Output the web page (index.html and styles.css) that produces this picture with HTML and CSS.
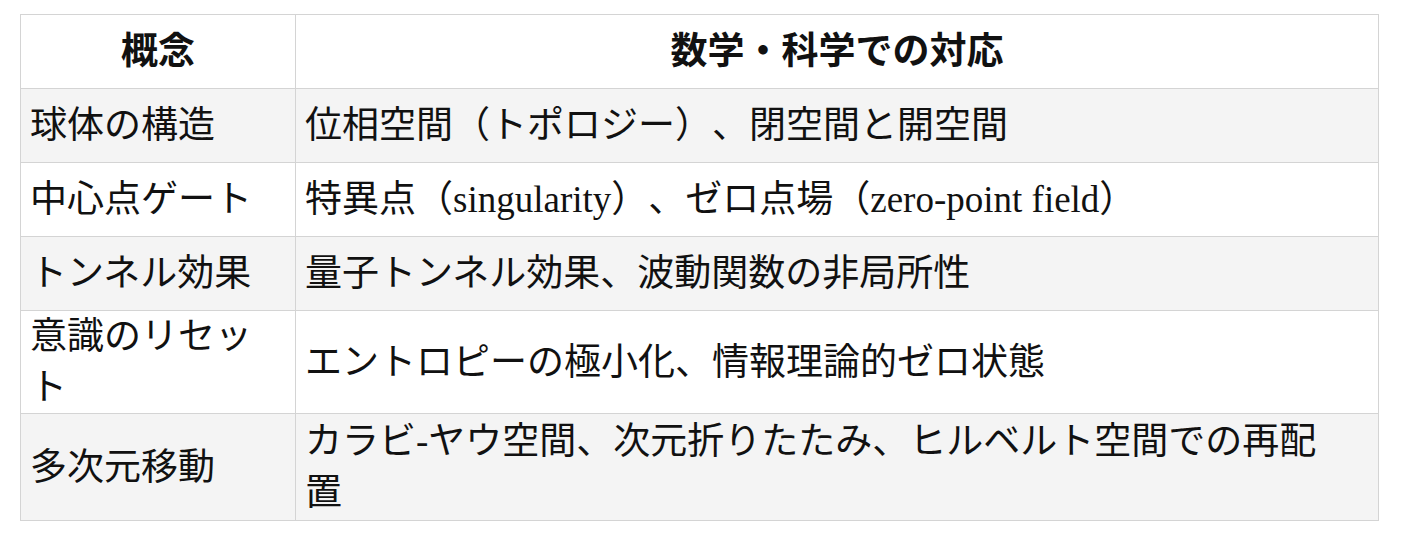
FILE: index.html
```html
<!DOCTYPE html>
<html lang="ja">
<head>
<meta charset="utf-8">
<title>概念と対応</title>
<link rel="stylesheet" href="styles.css">
</head>
<body>
<table class="map">
  <colgroup>
    <col class="c-concept">
    <col class="c-math">
  </colgroup>
  <thead>
    <tr>
      <th>概念</th>
      <th>数学・科学での対応</th>
    </tr>
  </thead>
  <tbody>
    <tr class="alt">
      <td>球体の構造</td>
      <td>位相空間（トポロジー）、閉空間と開空間</td>
    </tr>
    <tr>
      <td>中心点ゲート</td>
      <td>特異点（singularity）、ゼロ点場（zero-point field）</td>
    </tr>
    <tr class="alt">
      <td>トンネル効果</td>
      <td>量子トンネル効果、波動関数の非局所性</td>
    </tr>
    <tr>
      <td>意識のリセット</td>
      <td>エントロピーの極小化、情報理論的ゼロ状態</td>
    </tr>
    <tr class="alt">
      <td>多次元移動</td>
      <td>カラビ-ヤウ空間、次元折りたたみ、ヒルベルト空間での再配置</td>
    </tr>
  </tbody>
</table>
</body>
</html>
```

FILE: styles.css
```css
html, body {
  margin: 0;
  padding: 0;
  background: #ffffff;
}

body {
  padding: 14px 24px 0 20px;
  font-family: "Liberation Serif", "Noto Sans CJK JP", serif;
  color: #111111;
  text-spacing-trim: space-all;
}

.map {
  border-collapse: collapse;
  table-layout: fixed;
  width: 1359px;
  font-size: 37px;
  line-height: 51px;
  text-spacing-trim: space-all;
}

.c-concept {
  width: 275px;
}

.map th,
.map td {
  border: 1px solid #d4d4d4;
  height: 73px;
  padding: 0 30px 0 9px;
  vertical-align: middle;
  text-align: left;
  font-weight: normal;
}

.map th {
  text-align: center;
  font-weight: bold;
  padding: 0 9px;
}

.map thead tr {
  background: #ffffff;
}

.map tr.alt {
  background: #f4f4f4;
}

.map tbody tr:last-child td {
  height: 106px;
}
```
